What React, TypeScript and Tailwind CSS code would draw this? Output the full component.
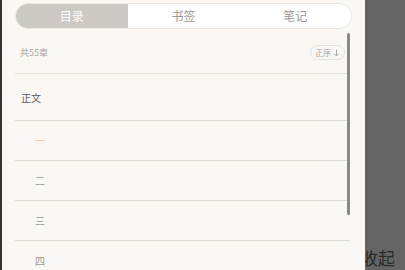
import React from "react";

const font = { fontFamily: '"Noto Sans CJK SC", "Noto Sans", sans-serif' };

const tabs = ["目录", "书签", "笔记"];
const chapters = ["一", "二", "三", "四"];

export default function App() {
  return (
    <div
      className="relative w-[405px] h-[270px] overflow-hidden bg-[#646464]"
      style={font}
    >
      {/* page behind the drawer */}
      <div className="absolute left-[361px] top-[248px] text-[17px] leading-[20px] text-[#2a2a2a]">
        收起
      </div>

      {/* drawer */}
      <div className="absolute left-0 top-0 h-full w-[365px] border-l-2 border-[#333] bg-[#faf7f4]">
        <div className="px-[13px] pt-[3px]">
          <div className="flex h-[26px] overflow-hidden rounded-full border border-[#ece8e4] bg-white">
            {tabs.map((t, i) => (
              <div
                key={t}
                className={
                  i === 0
                    ? "flex flex-1 items-center justify-center bg-[#cdc9c5] text-[12px] text-white"
                    : "flex flex-1 items-center justify-center text-[12px] text-[#9a9a9a]"
                }
              >
                {t}
              </div>
            ))}
          </div>
        </div>

        <div className="relative">
          <div className="ml-[13px] mr-[15px]">
            <div className="flex h-[45px] items-center justify-between border-b border-[#e5e1dd] pl-[5px] pt-[3px]">
              <span className="text-[9px] text-[#aaa]">共55章</span>
              <span className="mr-[5px] flex h-[15px] items-center gap-[2px] rounded-full border border-[#e6e2de] px-[4px] text-[8px] text-[#aaa]">
                正序
                <svg width="7" height="8" viewBox="0 0 7 8" fill="none">
                  <path
                    d="M3.5 0.5v6.5M1 4.5l2.5 2.5 2.5-2.5"
                    stroke="#aaa"
                    strokeWidth="1"
                  />
                </svg>
              </span>
            </div>
            <div className="flex h-[47px] items-center border-b border-[#e0dcd8] pl-[6px] text-[10px] text-[#5a5a5a]">
              正文
            </div>
            {chapters.map((c, i) => (
              <div
                key={c}
                className={
                  i === 0
                    ? "flex h-[40px] items-center border-b border-[#e0dcd8] pl-[20px] text-[10px] text-[#f0c48a]"
                    : "flex h-[40px] items-center border-b border-[#e0dcd8] pl-[20px] text-[10px] text-[#999]"
                }
              >
                {c}
              </div>
            ))}
          </div>
          {/* scrollbar */}
          <div className="absolute right-[15px] top-[4px] h-[182px] w-[3px] rounded-full bg-[#8a8a8a]" />
        </div>
      </div>
    </div>
  );
}
